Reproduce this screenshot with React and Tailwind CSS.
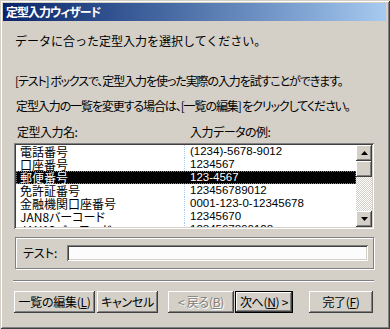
import React from "react";

const raised =
  "shadow-[inset_-1px_-1px_#404040,inset_1px_1px_#ffffff,inset_-2px_-2px_#808080,inset_2px_2px_#d4d0c8]";
const sunken =
  "shadow-[inset_1px_1px_#808080,inset_-1px_-1px_#ffffff,inset_2px_2px_#404040,inset_-2px_-2px_#d4d0c8]";

const ROWS = [
  { name: "電話番号", sample: "(1234)-5678-9012" },
  { name: "口座番号", sample: "1234567" },
  { name: "郵便番号", sample: "123-4567", selected: true },
  { name: "免許証番号", sample: "123456789012" },
  { name: "金融機関口座番号", sample: "0001-123-0-12345678" },
  { name: "JAN8バーコード", sample: "12345670" },
  { name: "JAN13バーコード", sample: "1234567890128" },
];

function Arrow({ up }) {
  return (
    <svg width="7" height="4" viewBox="0 0 7 4">
      <path d={up ? "M3.5 0 L7 4 L0 4 Z" : "M0 0 L7 0 L3.5 4 Z"} fill="#000" />
    </svg>
  );
}

function Button({ children, width, disabled, isDefault }) {
  if (isDefault) {
    return (
      <div className="h-[22px] border border-black shrink-0" style={{ width }}>
        <div className={`h-full w-full flex items-center justify-center whitespace-nowrap ${raised}`}>
          {children}
        </div>
      </div>
    );
  }
  return (
    <div
      className={`h-[22px] shrink-0 flex items-center justify-center whitespace-nowrap ${raised} ${
        disabled ? "text-[#808080] [text-shadow:1px_1px_#ffffff]" : ""
      }`}
      style={{ width }}
    >
      {children}
    </div>
  );
}

export default function App() {
  return (
    <div className="w-[390px] h-[329px] bg-[#d4d0c8] p-[3px] flex flex-col text-[12px] leading-4 text-black font-['Noto_Sans_CJK_JP',sans-serif] [font-feature-settings:'palt'] shadow-[inset_1px_1px_#d4d0c8,inset_-1px_-1px_#404040,inset_2px_2px_#ffffff,inset_-2px_-2px_#808080] overflow-hidden">
      {/* title bar */}
      <div className="h-[18px] w-[383px] bg-linear-to-r from-[#0a246a] to-[#a6caf0] flex items-center pl-[3px]">
        <span className="text-white font-bold text-[12px] tracking-[-1px]">定型入力ウィザード</span>
      </div>

      <p className="mt-[12px] ml-[12px] whitespace-nowrap [font-feature-settings:normal]">
        データに合った定型入力を選択してください。
      </p>
      <p className="mt-[24px] ml-[12px] whitespace-nowrap tracking-[-1.1px]">
        [テスト] ボックスで、定型入力を使った実際の入力を試すことができます。
      </p>
      <p className="mt-[9px] ml-[13px] whitespace-nowrap tracking-[-1.1px]">
        定型入力の一覧を変更する場合は、[一覧の編集] をクリックしてください。
      </p>
      <div className="mt-[10px] ml-[14px] flex tracking-[-0.5px]">
        <span className="w-[173px]">定型入力名:</span>
        <span>入力データの例:</span>
      </div>

      {/* list box */}
      <div className={`mt-[3px] ml-[11px] w-[360px] h-[86px] bg-white p-[2px] flex ${sunken}`}>
        <div className="flex-1 overflow-hidden">
          {ROWS.map((r) => (
            <div
              key={r.name}
              className={`h-[13px] flex items-center leading-[13px] ${
                r.selected
                  ? "bg-black text-white outline-1 outline-dotted outline-[#808080] -outline-offset-1"
                  : ""
              }`}
            >
              <span className="w-[168px] pl-[4px] whitespace-nowrap">{r.name}</span>
              <span
                className={`h-full pl-[5px] border-l border-dotted whitespace-nowrap font-['Liberation_Sans','Noto_Sans_CJK_JP',sans-serif] text-[11.5px] ${
                  r.selected ? "border-black" : "border-[#a6caf0]"
                }`}
              >
                {r.sample}
              </span>
            </div>
          ))}
        </div>
        <div className="w-[16px] flex flex-col bg-[repeating-conic-gradient(#ffffff_0_25%,#d4d0c8_0_50%)] bg-[length:2px_2px]">
          <div className={`h-[16px] bg-[#d4d0c8] flex items-center justify-center ${raised}`}>
            <Arrow up />
          </div>
          <div className={`h-[16px] bg-[#d4d0c8] ${raised}`} />
          <div className="flex-1" />
          <div className={`h-[16px] bg-[#d4d0c8] flex items-center justify-center ${raised}`}>
            <Arrow />
          </div>
        </div>
      </div>

      {/* test group */}
      <div className="mt-[8px] ml-[12px] w-[359px] h-[32px] border border-[#808080] shadow-[1px_1px_#ffffff,inset_1px_1px_#ffffff] flex items-center pl-[7px] pr-[5px]">
        <span className="w-[44px] shrink-0 whitespace-nowrap">テスト:</span>
        <div className={`h-[16px] flex-1 bg-[#fcfcfc] ${sunken}`} />
      </div>

      {/* separator */}
      <div className="mt-[11px] ml-[10px] w-[361px] h-[2px] border-t border-[#808080] border-b border-b-white" />

      {/* buttons */}
      <div className="mt-[9px] ml-[11px] flex items-center tracking-[-0.3px]">
        <Button width={81}>
          一覧の編集(<span className="underline">L</span>)
        </Button>
        <div className="w-[2px]" />
        <Button width={61}>キャンセル</Button>
        <div className="w-[10px]" />
        <Button width={66} disabled>
          &lt; 戻る(<span className="underline">B</span>)
        </Button>
        <div className="w-[1px]" />
        <Button width={58} isDefault>
          次へ(<span className="underline">N</span>) &gt;
        </Button>
        <div className="w-[16px]" />
        <Button width={64}>
          完了(<span className="underline">F</span>)
        </Button>
      </div>
    </div>
  );
}
